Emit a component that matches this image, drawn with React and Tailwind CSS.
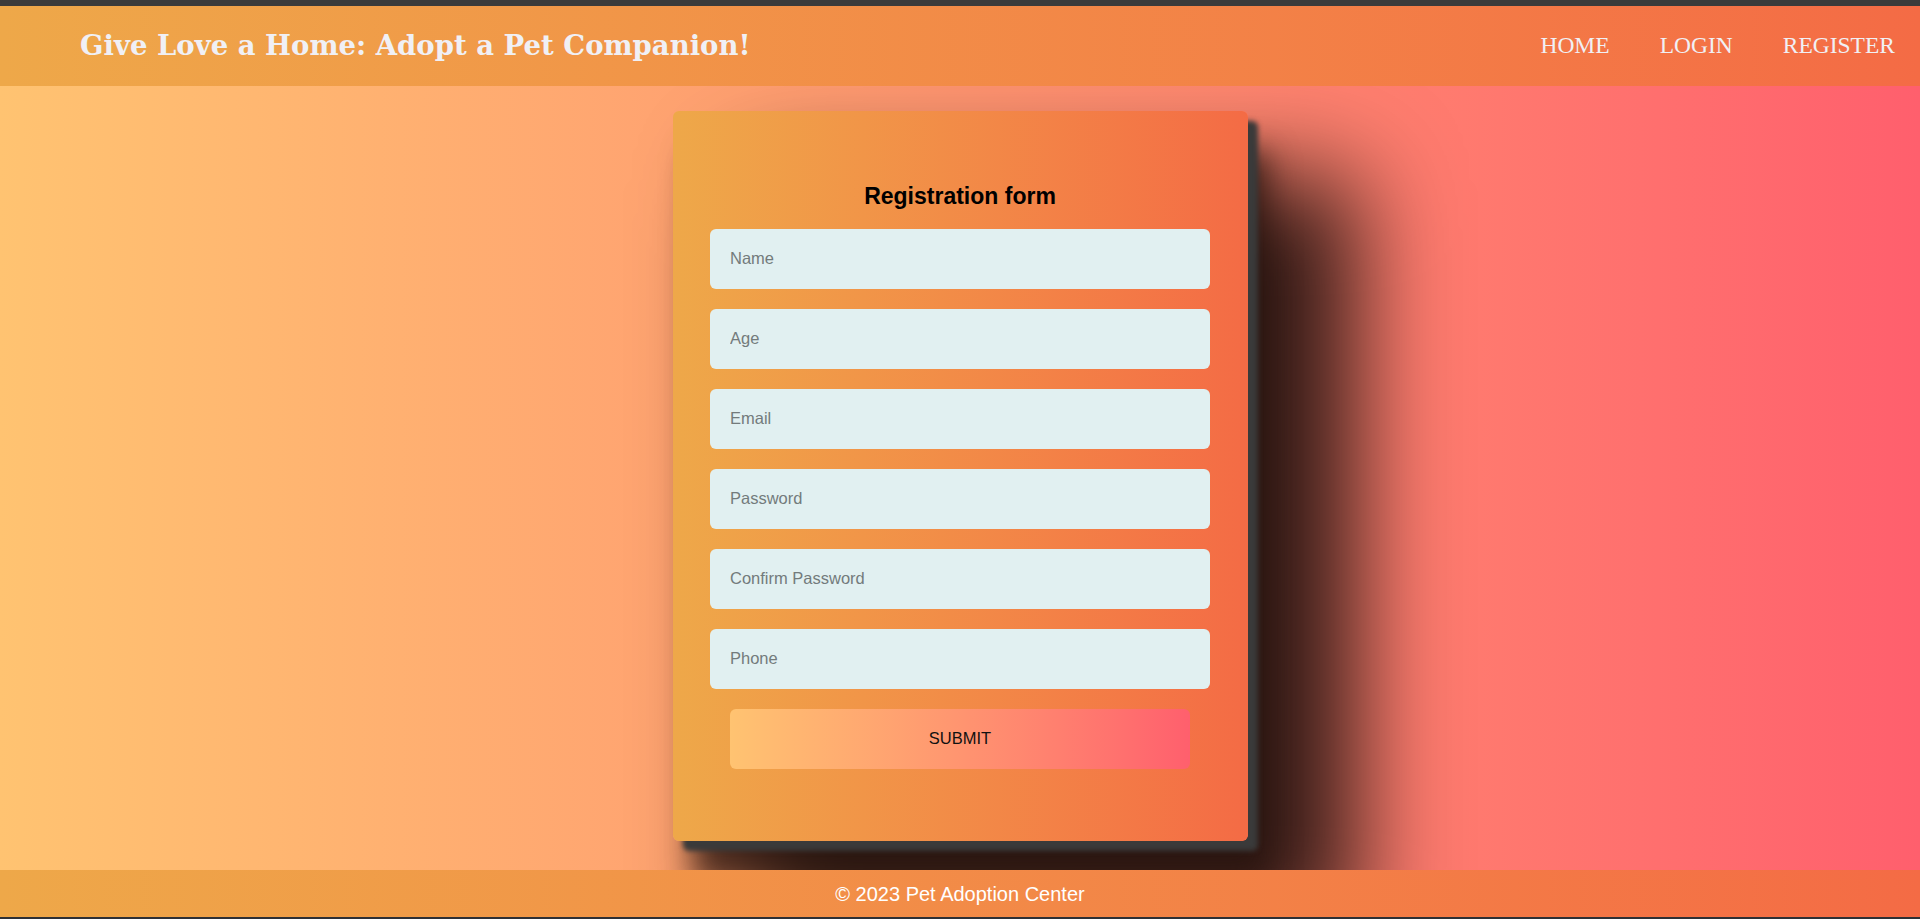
export default function App() {
  const fields = ["Name", "Age", "Email", "Password", "Confirm Password", "Phone"];
  return (
    <div className="flex h-[919px] flex-col overflow-hidden font-['Liberation_Sans',Arial,sans-serif]">
      <div className="h-[6px] bg-[#3b3b3b]" />
      <header className="relative z-10 flex h-[80px] items-center justify-between bg-linear-to-r from-[#eea849] to-[#f46b45] pl-[80px] pr-[25px]">
        <h1 className="font-['DejaVu_Serif',serif] text-[27.5px] font-bold text-[#f0f0f5]">
          Give Love a Home: Adopt a Pet Companion!
        </h1>
        <nav className="flex gap-[50px] font-['Liberation_Serif',serif] text-[23.5px] text-[#f0f0f5]">
          <a href="#">HOME</a>
          <a href="#">LOGIN</a>
          <a href="#">REGISTER</a>
        </nav>
      </header>
      <main className="flex flex-1 justify-center bg-linear-to-r from-[#ffc371] to-[#ff5f6d] pt-[25px]">
        <form className="flex h-[730px] w-[575px] flex-col items-center rounded-[6px] bg-linear-to-r from-[#eea849] to-[#f46b45] pt-[68px] shadow-[10px_10px_5px_rgba(58,58,58,1),20px_40px_30px_rgba(40,20,15,0.75),90px_85px_100px_20px_rgba(0,0,0,0.8)]">
          <h2 className="mb-[15px] text-[23px] font-bold leading-normal text-black">Registration form</h2>
          <div className="flex flex-col gap-[20px]">
            {fields.map((f) => (
              <input
                key={f}
                type="text"
                placeholder={f}
                className="h-[60px] w-[500px] rounded-[6px] bg-[#e1f0f1] px-[20px] text-[16.5px] text-black outline-none placeholder:text-[#737b7c]"
              />
            ))}
            <button
              type="button"
              className="mx-auto h-[60px] w-[460px] rounded-[6px] bg-linear-to-r from-[#ffc371] to-[#ff5f6d] text-[16.5px] text-[#111]"
            >
              SUBMIT
            </button>
          </div>
        </form>
      </main>
      <footer className="relative z-10 flex h-[47px] items-center justify-center bg-linear-to-r from-[#eea849] to-[#f46b45] text-[20px] text-white">
        © 2023 Pet Adoption Center
      </footer>
      <div className="h-[2px] bg-[#2e3035]" />
    </div>
  );
}
